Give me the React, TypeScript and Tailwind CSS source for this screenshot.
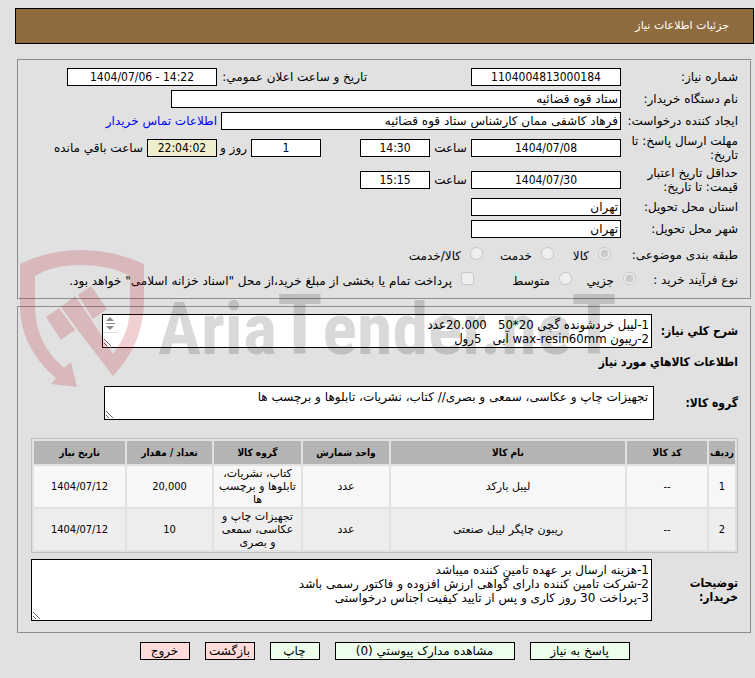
import type { ReactNode } from "react";
import clsx from "clsx";

const box = "h-[18px] border border-black px-0.5";
const narrow = "font-['DejaVu_Sans_Condensed','DejaVu_Sans',sans-serif]";

function Field({ id, value, className }: { id: string; value: string; className?: string }) {
  return <input id={id} type="text" readOnly defaultValue={value} className={clsx(box, "bg-white", className)} />;
}

function NumberField({ id, value, className }: { id: string; value: string; className?: string }) {
  return (
    <input id={id} type="text" dir="ltr" readOnly defaultValue={value} className={clsx(box, narrow, "text-center", className)} />
  );
}

function Row({ id, label, children }: { id?: string; label: string; children: ReactNode }) {
  return (
    <div className="flex items-center min-h-[22px] py-0.5">
      <label htmlFor={id} className="w-[117px] shrink-0">{label}</label>
      {children}
    </div>
  );
}

function Option({ name, label, type = "radio", checked, className }: {
  name: string; label: string; type?: string; checked?: boolean; className?: string;
}) {
  return (
    <label className={clsx("flex items-start gap-[9px] shrink-0 whitespace-nowrap", className)}>
      <input type={type} name={name} disabled defaultChecked={checked} className="size-[13px] shrink-0" />
      <span className="pt-[3px] leading-[13px]">{label}</span>
    </label>
  );
}

const columns = [
  { title: "ردیف", width: "w-[26px]" },
  { title: "کد کالا", width: "w-[80px]" },
  { title: "نام کالا", width: "w-[234px]" },
  { title: "واحد شمارش", width: "w-[86px]" },
  { title: "گروه کالا", width: "w-[87px]" },
  { title: "تعداد / مقدار", width: "w-[85px]" },
  { title: "تاریخ نیاز", width: "w-[91px]" },
];

const items = [
  ["1", "--", "لیبل بارکد", "عدد", "کتاب، نشریات، تابلوها و برچسب ها", "20,000", "1404/07/12"],
  ["2", "--", "ریبون چاپگر لیبل صنعتی", "عدد", "تجهیزات چاپ و عکاسی، سمعی و بصری", "10", "1404/07/12"],
];

const actions = [
  { label: "پاسخ به نیاز", style: "w-[100px] bg-[#ebffeb]" },
  { label: "مشاهده مدارک پیوستي (0)", style: "w-[180px] bg-[#ebffeb]" },
  { label: "چاپ", style: "w-[50px] bg-[#ebffeb]" },
  { label: "بازگشت", style: "w-[50px] bg-[#ffdbdb]" },
  { label: "خروج", style: "w-[50px] bg-[#ffdbdb]" },
];

export default function App() {
  return (
    <div dir="rtl" className="relative min-h-screen overflow-hidden bg-[#e1e1e1] pt-2 pb-4 pl-[15px] pr-px font-['DejaVu_Sans',sans-serif] text-[12px] leading-[14px] text-black">
      <header className="flex h-9 items-center border border-black bg-[#8f6c3f] px-6 text-white">
        <h1 className="text-[11px]">جزئیات اطلاعات نیاز</h1>
      </header>

      {/* Need details */}
      <section className="mt-[15px] ml-0.5 mr-0.5 border-2 border-[#e1e1e1] [border-style:groove] pt-[5px] pb-1.5 px-3">
        <Row id="number" label="شماره نیاز:">
          <NumberField id="number" value="1104004813000184" className="w-[150px] bg-white" />
          <label htmlFor="announced" className="ms-[104px] w-[150px] shrink-0 whitespace-nowrap">تاریخ و ساعت اعلان عمومي:</label>
          <NumberField id="announced" value="1404/07/06 - 14:22" className="w-[150px] bg-white" />
        </Row>
        <Row id="org" label="نام دستگاه خریدار:">
          <Field id="org" value="ستاد قوه قضائیه" className="w-[450px]" />
        </Row>
        <Row id="creator" label="ایجاد کننده درخواست:">
          <Field id="creator" value="فرهاد کاشفی ممان کارشناس ستاد قوه قضائیه" className="w-[400px]" />
          <a href="#contact" className="ms-1 text-[#0000ff]">اطلاعات تماس خریدار</a>
        </Row>
        <Row id="deadline" label="مهلت ارسال پاسخ: تا تاریخ:">
          <NumberField id="deadline" value="1404/07/08" className="w-[150px] bg-white" />
          <label htmlFor="deadlineTime" className="w-[41px] text-center">ساعت</label>
          <NumberField id="deadlineTime" value="14:30" className="w-[70px] bg-white" />
          <NumberField id="days" value="1" className="mr-[39px] w-[70px] bg-white" />
          <label htmlFor="days" className="w-[34px] ps-1 whitespace-nowrap">روز و</label>
          <NumberField id="left" value="22:04:02" className="w-[70px] bg-[#eeeecc]" />
          <label htmlFor="left" className="ms-1 whitespace-nowrap">ساعت باقي مانده</label>
        </Row>
        <Row id="validity" label="حداقل تاریخ اعتبار قیمت: تا تاریخ:">
          <NumberField id="validity" value="1404/07/30" className="w-[150px] bg-white" />
          <label htmlFor="validityTime" className="w-[41px] text-center">ساعت</label>
          <NumberField id="validityTime" value="15:15" className="w-[70px] bg-white" />
        </Row>
        <Row id="province" label="استان محل تحویل:">
          <Field id="province" value="تهران" className="w-[150px]" />
        </Row>
        <Row id="city" label="شهر محل تحویل:">
          <Field id="city" value="تهران" className="w-[150px]" />
        </Row>
        <div className="mt-[3px] flex h-6 items-center">
          <span className="w-[127px] shrink-0">طبقه بندی موضوعی:</span>
          <Option name="subject" label="کالا" checked className="w-[57px]" />
          <Option name="subject" label="خدمت" className="w-[71px]" />
          <Option name="subject" label="کالا/خدمت" />
        </div>
        <div className="flex h-[25px] items-center">
          <span className="w-[102px] shrink-0">نوع فرآیند خرید :</span>
          <Option name="process" label="جزیي" checked className="w-[64px]" />
          <Option name="process" label="متوسط" className="w-[98px]" />
          <Option name="treasury" type="checkbox" label={'پرداخت تمام یا بخشی از مبلغ خرید،از محل "اسناد خزانه اسلامی" خواهد بود.'} />
        </div>
      </section>

      {/* Requested items */}
      <section className="mt-1.5 ml-0.5 mr-0.5 border-2 border-[#e1e1e1] [border-style:groove] pt-1.5 pb-[11px] px-3">
        <div className="flex items-center">
          <label htmlFor="summary" className={clsx("w-[86px] shrink-0 whitespace-nowrap font-bold", narrow)}>شرح کلي نیاز:</label>
          <div className="relative w-[550px]">
            <textarea id="summary" readOnly className={clsx("block h-[34px] w-full resize overflow-hidden border border-black bg-white px-0.5 py-[3px] text-[13px]", narrow)} defaultValue={"1-لیبل خردشونده گچی 20*50   20.000عدد\n2-ریبون wax-resin60mm آبی   5رول"} />
            <svg className="absolute left-px top-px" width="15" height="19" viewBox="0 0 15 19" fill="#8a8a8a">
              <path d="M3 6 7 2l4 4zM3 8h9v1H3zM3 11h8l-4 4z" />
              <path d="M0 17h15v1H0z" fill="#dcdcdc" />
            </svg>
          </div>
        </div>
        <h2 className={clsx("mt-[7px] font-bold", narrow)}>اطلاعات کالاهاي مورد نیاز</h2>
        <div className="mt-[17px] flex items-center">
          <label htmlFor="group" className={clsx("w-[84px] shrink-0 font-bold", narrow)}>گروه کالا:</label>
          <textarea id="group" readOnly className="block h-[34px] w-[550px] resize overflow-hidden border border-black bg-white px-[5px] py-[3px]" defaultValue="تجهیزات چاپ و عکاسی، سمعی و بصری// کتاب، نشریات، تابلوها و برچسب ها" />
        </div>
        <table className="mt-[18px] w-full table-fixed border-separate border-spacing-0.5 border border-[#c0c0c0] text-center text-[11px] leading-[13px]">
          <thead>
            <tr className={clsx("h-[23px] bg-[#b4b4b4] text-[10px]", narrow)}>
              {columns.map((c) => (
                <th key={c.title} className={clsx("whitespace-nowrap", c.width)}>{c.title}</th>
              ))}
            </tr>
          </thead>
          <tbody>
            {items.map((item) => (
              <tr key={item[0]} className="h-[41px] odd:bg-[#f7f7f7] even:bg-[#eeeeee]">
                {item.map((cell, i) => (
                  <td key={i} className={clsx("px-1 py-px", /^[\d-]/.test(cell) && narrow)}>{cell}</td>
                ))}
              </tr>
            ))}
          </tbody>
        </table>
        <div className="mt-1.5 flex items-center">
          <label htmlFor="notes" className={clsx("w-[86px] shrink-0 pl-4 font-bold", narrow)}>توضیحات خریدار:</label>
          <textarea id="notes" readOnly className="block h-[62px] min-w-0 flex-1 resize overflow-hidden border border-black bg-white px-0.5 py-[3px]" defaultValue={"1-هزینه ارسال بر عهده تامین کننده میباشد\n2-شرکت تامین کننده دارای گواهی ارزش افزوده و فاکتور رسمی باشد\n3-پرداخت 30 روز کاری و پس از تایید کیفیت اجناس درخواستی"} />
        </div>
      </section>

      <div className="mt-2 flex justify-center gap-[15px]">
        {actions.map((a) => (
          <button key={a.label} className={clsx("h-[18px] whitespace-nowrap border border-black", a.style)}>{a.label}</button>
        ))}
      </div>

      {/* Watermark */}
      <div dir="ltr" className="pointer-events-none absolute left-5 top-[249px] flex items-start gap-3">
        <svg width="126" height="140" viewBox="0 0 126 140" fill="#b4141e" fillOpacity="0.2">
          <path d="M0 15Q28 1 61 1t63 14v36c0 30-11 55-31 76L57 80 41 58l14-11 16 23 22 35c11-14 17-30 17-47V27Q90 16 61 16T15 27v29c0 27 10 46 29 63l7-6 6 25-26-3 5-6C13 110 0 84 0 56z" />
          <path d="M26 68l13-9 16 22-14 10zM58 46l13-9 16 23-14 10z" />
        </svg>
        <span className="mt-8 whitespace-nowrap text-[72px] leading-[90px] font-bold font-['Roboto_Condensed',Roboto,sans-serif] text-black/15">
          Aria<span className="text-[84px]">T</span>ender.ne<span className="text-[84px]">T</span>
        </span>
      </div>
    </div>
  );
}
